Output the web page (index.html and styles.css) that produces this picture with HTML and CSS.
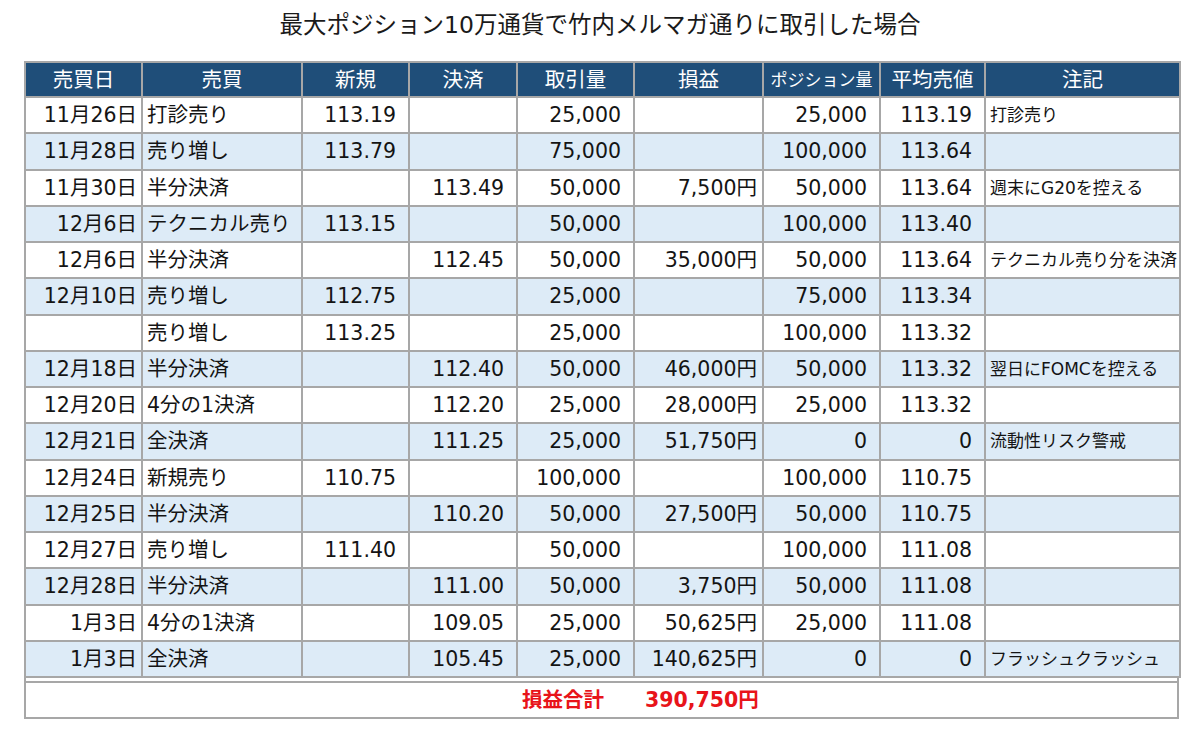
FILE: index.html
```html
<!DOCTYPE html>
<html lang="ja">
<head>
<meta charset="utf-8">
<title>最大ポジション10万通貨で竹内メルマガ通りに取引した場合</title>
<link rel="stylesheet" href="styles.css">
</head>
<body>
<div class="page">
  <h1 class="title">最大ポジション10万通貨で竹内メルマガ通りに取引した場合</h1>
  <div class="sheet">
    <table class="grid">
      <colgroup>
        <col class="c-date"><col class="c-type"><col class="c-new"><col class="c-close"><col class="c-vol"><col class="c-pl"><col class="c-pos"><col class="c-avg"><col class="c-note">
      </colgroup>
      <thead>
        <tr>
          <th>売買日</th><th>売買</th><th>新規</th><th>決済</th><th>取引量</th><th>損益</th><th class="small">ポジション量</th><th>平均売値</th><th>注記</th>
        </tr>
      </thead>
      <tbody>
        <tr><td class="date">11月26日</td><td class="txt">打診売り</td><td class="num">113.19</td><td class="num"></td><td class="num">25,000</td><td class="pl"></td><td class="num">25,000</td><td class="num">113.19</td><td class="note">打診売り</td></tr>
        <tr class="alt"><td class="date">11月28日</td><td class="txt">売り増し</td><td class="num">113.79</td><td class="num"></td><td class="num">75,000</td><td class="pl"></td><td class="num">100,000</td><td class="num">113.64</td><td class="note"></td></tr>
        <tr><td class="date">11月30日</td><td class="txt">半分決済</td><td class="num"></td><td class="num">113.49</td><td class="num">50,000</td><td class="pl">7,500円</td><td class="num">50,000</td><td class="num">113.64</td><td class="note">週末にG20を控える</td></tr>
        <tr class="alt"><td class="date">12月6日</td><td class="txt">テクニカル売り</td><td class="num">113.15</td><td class="num"></td><td class="num">50,000</td><td class="pl"></td><td class="num">100,000</td><td class="num">113.40</td><td class="note"></td></tr>
        <tr><td class="date">12月6日</td><td class="txt">半分決済</td><td class="num"></td><td class="num">112.45</td><td class="num">50,000</td><td class="pl">35,000円</td><td class="num">50,000</td><td class="num">113.64</td><td class="note">テクニカル売り分を決済</td></tr>
        <tr class="alt"><td class="date">12月10日</td><td class="txt">売り増し</td><td class="num">112.75</td><td class="num"></td><td class="num">25,000</td><td class="pl"></td><td class="num">75,000</td><td class="num">113.34</td><td class="note"></td></tr>
        <tr><td class="date"></td><td class="txt">売り増し</td><td class="num">113.25</td><td class="num"></td><td class="num">25,000</td><td class="pl"></td><td class="num">100,000</td><td class="num">113.32</td><td class="note"></td></tr>
        <tr class="alt"><td class="date">12月18日</td><td class="txt">半分決済</td><td class="num"></td><td class="num">112.40</td><td class="num">50,000</td><td class="pl">46,000円</td><td class="num">50,000</td><td class="num">113.32</td><td class="note">翌日にFOMCを控える</td></tr>
        <tr><td class="date">12月20日</td><td class="txt">4分の1決済</td><td class="num"></td><td class="num">112.20</td><td class="num">25,000</td><td class="pl">28,000円</td><td class="num">25,000</td><td class="num">113.32</td><td class="note"></td></tr>
        <tr class="alt"><td class="date">12月21日</td><td class="txt">全決済</td><td class="num"></td><td class="num">111.25</td><td class="num">25,000</td><td class="pl">51,750円</td><td class="num">0</td><td class="num">0</td><td class="note">流動性リスク警戒</td></tr>
        <tr><td class="date">12月24日</td><td class="txt">新規売り</td><td class="num">110.75</td><td class="num"></td><td class="num">100,000</td><td class="pl"></td><td class="num">100,000</td><td class="num">110.75</td><td class="note"></td></tr>
        <tr class="alt"><td class="date">12月25日</td><td class="txt">半分決済</td><td class="num"></td><td class="num">110.20</td><td class="num">50,000</td><td class="pl">27,500円</td><td class="num">50,000</td><td class="num">110.75</td><td class="note"></td></tr>
        <tr><td class="date">12月27日</td><td class="txt">売り増し</td><td class="num">111.40</td><td class="num"></td><td class="num">50,000</td><td class="pl"></td><td class="num">100,000</td><td class="num">111.08</td><td class="note"></td></tr>
        <tr class="alt"><td class="date">12月28日</td><td class="txt">半分決済</td><td class="num"></td><td class="num">111.00</td><td class="num">50,000</td><td class="pl">3,750円</td><td class="num">50,000</td><td class="num">111.08</td><td class="note"></td></tr>
        <tr><td class="date">1月3日</td><td class="txt">4分の1決済</td><td class="num"></td><td class="num">109.05</td><td class="num">25,000</td><td class="pl">50,625円</td><td class="num">25,000</td><td class="num">111.08</td><td class="note"></td></tr>
        <tr class="alt"><td class="date">1月3日</td><td class="txt">全決済</td><td class="num"></td><td class="num">105.45</td><td class="num">25,000</td><td class="pl">140,625円</td><td class="num">0</td><td class="num">0</td><td class="note">フラッシュクラッシュ</td></tr>
      </tbody>
    </table>
    <div class="total-wrap">
      <div class="total">
        <span class="total-label">損益合計</span>
        <span class="total-value">390,750円</span>
      </div>
    </div>
  </div>
</div>
</body>
</html>
```

FILE: styles.css
```css
html, body {
  margin: 0;
  padding: 0;
  background: #ffffff;
}

body {
  font-family: "DejaVu Sans", "Noto Sans CJK JP", sans-serif;
  color: #141414;
}

.page {
  width: 1200px;
  height: 729px;
  overflow: hidden;
}

.title {
  margin: 0;
  height: 50px;
  line-height: 50px;
  font-size: 23.5px;
  font-weight: normal;
  text-align: center;
  color: #1a1a1a;
}

.sheet {
  width: 1155px;
  margin: 11px 0 0 24px;
}

.grid {
  width: 1155px;
  table-layout: fixed;
  border-collapse: collapse;
  font-size: 20.5px;
}

.c-date { width: 117px; }
.c-type { width: 160px; }
.c-new { width: 107px; }
.c-close { width: 108px; }
.c-vol { width: 117px; }
.c-pl { width: 129px; }
.c-pos { width: 117px; }
.c-avg { width: 105px; }
.c-note { width: 195px; }

.grid th,
.grid td {
  border: 2px solid #a7a7a7;
  padding: 0;
  line-height: 24px;
  white-space: nowrap;
  overflow: hidden;
  vertical-align: middle;
}

.grid thead tr {
  height: 35px;
}

.grid th {
  background: #1f4e79;
  color: #ffffff;
  font-weight: normal;
  text-align: center;
  font-size: 20.5px;
}

.grid th.small {
  font-size: 17px;
}

.grid tbody tr {
  height: 36.25px;
}

.grid tr.alt td {
  background: #ddebf7;
}

.date {
  text-align: right;
  padding-right: 4px !important;
}

.txt {
  text-align: left;
  padding-left: 4px !important;
}

.num {
  text-align: right;
  padding-right: 12px !important;
}

.pl {
  text-align: right;
  padding-right: 5px !important;
}

.note {
  text-align: left;
  padding-left: 4px !important;
  font-size: 17px;
}

.total-wrap {
  border: 2px solid #a7a7a7;
  border-top: none;
  padding-top: 3px;
}

.total {
  border-top: 2px solid #a7a7a7;
  height: 34px;
  display: flex;
  align-items: center;
  gap: 41px;
  padding-left: 496px;
  color: #e8141a;
  font-weight: bold;
  font-size: 20.5px;
  line-height: 24px;
}
```
